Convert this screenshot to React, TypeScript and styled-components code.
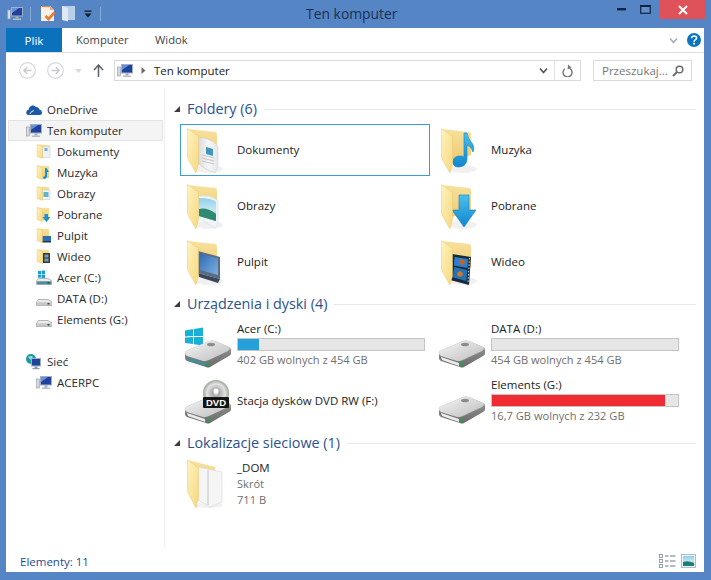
import React from "react";
import styled, { createGlobalStyle } from "styled-components";

const GlobalStyle = createGlobalStyle`
  html, body {
    margin: 0;
    padding: 0;
  }
  body {
    width: 711px;
    height: 580px;
    overflow: hidden;
    font-family: "Open Sans", "Noto Sans", sans-serif;
    font-size: 11.5px;
    color: #222;
  }
  svg {
    display: block;
    flex-shrink: 0;
  }
`;

const Frame = styled.div`
  display: flex;
  flex-direction: column;
  height: 580px;
  box-sizing: border-box;
  padding: 0 7px 8px 6px;
  background: #5585c5;
`;

const TitleBar = styled.div`
  display: grid;
  grid-template-columns: 300px auto 1fr;
  height: 28px;
`;

const QuickAccess = styled.div`
  display: flex;
  align-items: center;
  height: 27px;
  margin-left: 1px;
`;

const QatSeparator = styled.div<{ $right: number; $left: number }>`
  width: 1px;
  height: 14px;
  background: #86a9d8;
  margin: 0 ${(p) => p.$right}px 0 ${(p) => p.$left}px;
`;

const QatGap = styled.div<{ $width: number }>`
  width: ${(p) => p.$width}px;
`;

const WindowTitle = styled.div`
  font-size: 13.9px;
  line-height: 28px;
  color: #1c2f4f;
`;

const WindowControls = styled.div`
  display: flex;
  justify-content: flex-end;
  align-items: flex-start;
  margin-right: -1px;
`;

const ControlButton = styled.div<{ $close?: boolean }>`
  display: flex;
  align-items: center;
  justify-content: center;
  height: 19px;
  width: ${(p) => (p.$close ? 45 : 24)}px;
  margin-left: ${(p) => (p.$close ? 3 : 0)}px;
  background: ${(p) => (p.$close ? "#e0525a" : "transparent")};
`;

const Main = styled.div`
  flex: 1;
  display: flex;
  flex-direction: column;
  background: #fff;
  min-height: 0;
`;

const Ribbon = styled.div`
  display: flex;
  align-items: stretch;
  height: 24px;
  border-bottom: 1px solid #dcdddf;
`;

const FileTab = styled.div`
  width: 56px;
  display: flex;
  align-items: center;
  justify-content: center;
  color: #fff;
  background: #0a72bd;
`;

const RibbonTab = styled.div<{ $width: number }>`
  width: ${(p) => p.$width}px;
  line-height: 24px;
  font-size: 11.2px;
  color: #444;
  padding-left: 14px;
  box-sizing: border-box;
`;

const RibbonRight = styled.div`
  margin-left: auto;
  display: flex;
  align-items: center;
  gap: 9px;
  padding-right: 3px;
`;

const Toolbar = styled.div`
  display: flex;
  align-items: flex-start;
  height: 35px;
  box-sizing: border-box;
  padding-top: 7px;
`;

const NavButtons = styled.div`
  display: flex;
  align-items: center;
  height: 21px;
  width: 108px;
  padding-left: 13px;
  box-sizing: border-box;
  gap: 11px;
`;

const AddressBox = styled.div`
  width: 467px;
  height: 21px;
  box-sizing: border-box;
  border: 1px solid #dadada;
  display: flex;
  align-items: center;
  padding-left: 2px;
`;

const Crumb = styled.span`
  color: #222;
  margin-left: 8px;
  flex: 1;
`;

const AddressEnd = styled.div`
  width: 25px;
  align-self: stretch;
  border-left: 1px solid #e3e3e3;
  display: flex;
  align-items: center;
  justify-content: center;
  margin-left: 6px;
`;

const SearchBox = styled.div`
  width: 99px;
  height: 21px;
  margin-left: 12px;
  box-sizing: border-box;
  border: 1px solid #dadada;
  display: flex;
  align-items: center;
  justify-content: space-between;
  padding: 0 7px 0 8px;
  color: #777;
`;

const Body = styled.div`
  flex: 1;
  display: flex;
  min-height: 0;
`;

const NavPane = styled.div`
  width: 159px;
  box-sizing: border-box;
  border-right: 1px solid #f0f0f0;
  padding: 11px 0 0 2px;
`;

const NavRow = styled.div<{ $level?: number; $selected?: boolean; $spaced?: boolean }>`
  display: flex;
  align-items: center;
  gap: 5px;
  height: 21px;
  width: 155px;
  box-sizing: border-box;
  padding-left: ${(p) => (p.$level ? 28 : 18)}px;
  margin-top: ${(p) => (p.$spaced ? 21 : 0)}px;
  background: ${(p) => (p.$selected ? "#f4f4f4" : "transparent")};
  box-shadow: ${(p) => (p.$selected ? "inset 0 0 0 1px #e4e4e4" : "none")};
  color: #2a2a2a;
`;

const Content = styled.div`
  flex: 1;
  padding: 11px 8px 0 9px;
`;

const Section = styled.section`
  margin-bottom: 6px;
`;

const GroupHeader = styled.div`
  display: flex;
  align-items: center;
  height: 20px;
  margin-bottom: 5px;
  font-size: 14.35px;
  color: #2a5290;
`;

const GroupTitle = styled.span`
  margin: -2px 7px 0;
`;

const GroupRule = styled.div`
  flex: 1;
  height: 1px;
  background: #e6e9ee;
`;

const TileGrid = styled.div`
  display: grid;
  grid-template-columns: 250px 250px;
  grid-auto-rows: 52px;
  gap: 4px;
  margin-left: 6px;
`;

const Tile = styled.div<{ $selected?: boolean }>`
  display: flex;
  align-items: center;
  gap: 6px;
  box-sizing: border-box;
  padding-left: 4px;
  border: 1px solid ${(p) => (p.$selected ? "#3d9bd6" : "transparent")};
`;

const TileText = styled.div`
  display: flex;
  flex-direction: column;
  flex: 1;
  margin-right: 4px;
`;

const DriveText = styled(TileText)`
  margin-top: -2px;
`;

const TileName = styled.div`
  color: #222;
  line-height: 16px;
`;

const TileSub = styled.div`
  color: #6f6f6f;
  font-size: 11.1px;
  line-height: 16px;
`;

const UsageBar = styled.div`
  height: 13px;
  box-sizing: border-box;
  margin: 1px 0 1px;
  border: 1px solid #c4c4c4;
  background: #e6e6e6;
`;

const UsageFill = styled.div<{ $tone: string }>`
  height: 100%;
  background: ${(p) => p.$tone};
`;

const StatusBar = styled.div`
  height: 24px;
  display: flex;
  align-items: center;
  justify-content: space-between;
  padding: 2px 8px 0 14px;
  box-sizing: border-box;
  color: #1f4c8f;
`;

const ViewIcons = styled.div`
  display: flex;
  align-items: center;
  gap: 5px;
`;

const Gradients = styled.svg`
  position: absolute;
  width: 0;
  height: 0;
`;

const SharedDefs = () => (
  <Gradients>
    <defs>
      <linearGradient id="leaf" x1="0" y1="0" x2="1" y2="1">
        <stop offset="0" stopColor="#fff3c0" />
        <stop offset="1" stopColor="#f6d87f" />
      </linearGradient>
      <linearGradient id="back" x1="0" y1="0" x2="0" y2="1">
        <stop offset="0" stopColor="#f8e19c" />
        <stop offset="1" stopColor="#edcb74" />
      </linearGradient>
      <linearGradient id="paper" x1="0" y1="0" x2="1" y2="0">
        <stop offset="0" stopColor="#d8d8dc" />
        <stop offset="0.5" stopColor="#f7f7f7" />
        <stop offset="1" stopColor="#e4e6ea" />
      </linearGradient>
      <linearGradient id="sky" x1="0" y1="0" x2="0" y2="1">
        <stop offset="0" stopColor="#8fd0ec" />
        <stop offset="0.55" stopColor="#c8e8ee" />
        <stop offset="1" stopColor="#4e9a8c" />
      </linearGradient>
      <linearGradient id="screen" x1="0" y1="0" x2="1" y2="1">
        <stop offset="0" stopColor="#2e6ab4" />
        <stop offset="1" stopColor="#7fb0e0" />
      </linearGradient>
      <linearGradient id="note" x1="0" y1="0" x2="0" y2="1">
        <stop offset="0" stopColor="#4cc0ec" />
        <stop offset="1" stopColor="#0f86cf" />
      </linearGradient>
      <linearGradient id="driveTop" x1="0" y1="0" x2="1" y2="1">
        <stop offset="0" stopColor="#f6f6f6" />
        <stop offset="1" stopColor="#bdbdbd" />
      </linearGradient>
      <linearGradient id="driveSide" x1="0" y1="0" x2="0" y2="1">
        <stop offset="0" stopColor="#9c9c9c" />
        <stop offset="1" stopColor="#6a6a6a" />
      </linearGradient>
      <radialGradient id="disc">
        <stop offset="0" stopColor="#f4f4f4" />
        <stop offset="0.25" stopColor="#a8a8a8" />
        <stop offset="0.7" stopColor="#e2e2e2" />
        <stop offset="1" stopColor="#9aa69b" />
      </radialGradient>
    </defs>
  </Gradients>
);

type Overlay = "doc" | "music" | "photo" | "download" | "desktop" | "video";

const FolderBase: React.FC<{ children?: React.ReactNode }> = ({ children }) => (
  <svg width="46" height="50" viewBox="0 0 46 50">
    <ellipse cx="24" cy="44" rx="14" ry="4" fill="#000" opacity="0.06" />
    <path d="M3 4 L30 7 Q32 7 32 10 L32 30 L13 36 Z" fill="url(#back)" />
    {children}
    <path d="M2.5 3.5 L13.5 11 L13.5 39 L11 48 L3.5 35 Q2.5 34 2.5 32 Z" fill="url(#leaf)" stroke="#e8c873" strokeWidth="0.5" />
  </svg>
);

const BigFolder: React.FC<{ kind: Overlay }> = ({ kind }) => (
  <FolderBase>
    {kind === "doc" && (
      <g>
        <path d="M13 12 Q29 14 33 22 L33 41 L30 48 Q20 44 13 39 Z" fill="url(#paper)" stroke="#c9c9cf" strokeWidth="0.5" />
        <path d="M21 22 L28 24 L28 31 L21 29 Z" fill="#3f96b8" />
        <path d="M17 30 L29 33 M17 33 L29 36 M17 36 L29 39" stroke="#c1c4ca" strokeWidth="1" />
      </g>
    )}
    {kind === "photo" && (
      <g>
        <path d="M13 15 Q28 14 33 20 L33 42 L30 47 L13 37 Z" fill="#eef4f8" stroke="#cdd6dc" strokeWidth="0.5" />
        <path d="M14 17 Q27 17 31 21 L31 40 L14 35 Z" fill="url(#sky)" />
        <path d="M14 28 Q22 26 31 33 L31 40 L14 35 Z" fill="#2e8a70" />
      </g>
    )}
    {kind === "desktop" && (
      <g>
        <path d="M13 14 L35 20 L35 42 L13 36 Z" fill="#5b6c80" />
        <path d="M15 16.5 L33 21.5 L33 38 L15 33 Z" fill="url(#screen)" />
        <path d="M13 36 L35 42 L33 46 L14 40 Z" fill="#39485a" />
      </g>
    )}
    {kind === "music" && (
      <path
        d="M25 8 L28 8 Q29 14 33 18 Q36 22 34 27 Q32 21 28 20 L28 34 Q28 41 20 42 Q13 42 14 36 Q15 31 21 31 Q24 31 25 32 Z"
        fill="url(#note)"
        stroke="#0e7dc4"
        strokeWidth="0.6"
      />
    )}
    {kind === "download" && (
      <path d="M20 14 L30 14 L30 29 L37 29 L25 46 L13 29 L20 29 Z" fill="url(#note)" stroke="#0e7dc4" strokeWidth="0.6" />
    )}
    {kind === "video" && (
      <g>
        <path d="M13 17 L32 20 L30 48 L11 43 Z" fill="#1b2a38" />
        <path d="M15.5 20 L29 22 L28.4 31 L15 28.5 Z" fill="#2f7fd0" />
        <path d="M15 30 L28.3 33 L27.4 44 L14 40.5 Z" fill="#2272b8" />
        <circle cx="23" cy="25" r="2.8" fill="#b9672e" />
        <circle cx="21" cy="37" r="2.8" fill="#c9782a" />
        <path d="M30.5 21 L29 46" stroke="#d8dde0" strokeWidth="1" strokeDasharray="1.6 1.6" />
      </g>
    )}
  </FolderBase>
);

const ShortcutFolder = () => (
  <svg width="46" height="52" viewBox="0 0 46 52">
    <ellipse cx="24" cy="47" rx="14" ry="3" fill="#000" opacity="0.05" />
    <path d="M3 2 L30 9 L30 30 L13 36 Z" fill="url(#back)" />
    <path d="M13 9 L37 14 L37 44 L25 49 L13 42 Z" fill="#f5f5f6" stroke="#d6d6da" strokeWidth="0.6" />
    <path d="M23 12 L23 47" stroke="#c4c4c8" strokeWidth="1" />
    <path d="M2.5 2 L13.5 10 L13.5 40 L11 50 L3.5 36 Q2.5 34 2.5 32 Z" fill="url(#leaf)" stroke="#e8c873" strokeWidth="0.5" />
  </svg>
);

const DriveShape: React.FC<{ tint?: string }> = ({ tint }) => (
  <g>
    <path d="M0 33 Q0 31 3 30 L24 21 Q27 20 30 21 L44 27 Q46 28 46 30 L46 34 Q46 35 44 36 L25 47 Q23 48 21 47 L2 41 Q0 40 0 38 Z" fill="url(#driveSide)" />
    <path d="M0 33 Q0 31 3 30 L24 21 Q27 20 30 21 L44 27 Q46 29 43 31 L24 40 Q21 41.5 18 41 L2 36 Q0 35 0 33 Z" fill="url(#driveTop)" />
    <ellipse cx="26" cy="24.5" rx="4" ry="1.8" fill="#8c8c8c" />
    <path d="M2 37 L20 43 L20 46 L3 40 Z" fill={tint ?? "#ececec"} />
    <path d="M21.5 43 L25 41.5 L25 45 L21.5 46.5 Z" fill="#2f9a55" />
  </g>
);

const BigDrive: React.FC<{ kind?: "plain" | "windows" | "dvd" }> = ({ kind = "plain" }) => (
  <svg width="46" height="50" viewBox="0 0 46 50">
    {kind === "windows" && (
      <g fill="#19b0d8">
        <path d="M0 10.5 L8 9 L8 16 L0 16.5 Z" />
        <path d="M9 9 L18 7.5 L18 16 L9 16 Z" />
        <path d="M0 17.5 L8 17 L8 24 L0 23 Z" />
        <path d="M9 17 L18 17 L18 25.5 L9 24.2 Z" />
      </g>
    )}
    <DriveShape tint={kind === "windows" ? "#3f8f9c" : undefined} />
    {kind === "dvd" && (
      <g>
        <circle cx="31" cy="17" r="13" fill="url(#disc)" />
        <circle cx="31" cy="15" r="2.5" fill="#fff" />
        <rect x="18" y="21" width="26" height="11" rx="1" fill="#141414" />
        <text x="31" y="30" textAnchor="middle" fontSize="9.5" fontWeight="700" fontFamily="Liberation Sans, sans-serif" fill="#fff">
          DVD
        </text>
      </g>
    )}
  </svg>
);

const PcIcon = () => (
  <svg width="16" height="16" viewBox="0 0 16 16">
    <rect x="0.5" y="4" width="3" height="9" fill="#d6dade" stroke="#8f98a2" strokeWidth="0.6" />
    <rect x="4" y="1" width="12" height="9.5" fill="#9fb0c6" />
    <rect x="5" y="2" width="10" height="7.5" fill="#21429c" />
    <path d="M5 2 L12 2 L5 7 Z" fill="#6a8fd6" />
    <rect x="8.5" y="10.5" width="3" height="2" fill="#a0a8b0" />
    <rect x="6" y="12.5" width="8" height="1.5" fill="#b6bcc2" />
  </svg>
);

const SmallFolder: React.FC<{ tone: string; kind: "doc" | "arrow" | "note" | "screen" | "film" | "photo" }> = ({ tone, kind }) => (
  <svg width="16" height="16" viewBox="0 0 16 16">
    <path d="M1 0.5 L13 1 L13 13 L7 13 Z" fill="url(#back)" />
    {kind === "note" && <path d="M9 3 L10.5 3 L13 7 L11 7 L11 12 Q10 14.5 7.5 14 L7 12 L9 11 Z" fill={tone} />}
    {kind === "arrow" && <path d="M8.5 7 L12 7 L12 10 L14.5 10 L10.5 15 L6.5 10 L8.5 10 Z" fill={tone} />}
    {kind === "doc" && (
      <g>
        <rect x="6" y="2.5" width="8" height="11" fill="#eef0f2" stroke="#c4c8cc" strokeWidth="0.5" />
        <rect x="8.5" y="4" width="3" height="3" fill={tone} />
      </g>
    )}
    {kind === "photo" && (
      <g>
        <rect x="6" y="4" width="8" height="9.5" fill="#f0f3f5" stroke="#c4c8cc" strokeWidth="0.5" />
        <rect x="7.5" y="6" width="5" height="5" fill={tone} />
      </g>
    )}
    {kind === "screen" && (
      <g>
        <rect x="6" y="8" width="9" height="6" fill={tone} />
        <rect x="6" y="13" width="9" height="1.5" fill="#2a3644" />
      </g>
    )}
    {kind === "film" && (
      <g>
        <rect x="7" y="4" width="7" height="10" fill="#2d3a44" />
        <rect x="8.5" y="5.5" width="4" height="3" fill={tone} />
        <rect x="8.5" y="9.5" width="4" height="3" fill={tone} />
      </g>
    )}
    <path d="M1 0.5 L6.5 2.5 L6.5 14.5 L1 12.5 Z" fill="url(#leaf)" stroke="#e3bf64" strokeWidth="0.4" />
  </svg>
);

const SmallDrive: React.FC<{ windows?: boolean }> = ({ windows }) => (
  <svg width="16" height="16" viewBox="0 0 16 16">
    {windows && (
      <g fill="#1a9fd0">
        <rect x="2" y="1" width="3" height="3" />
        <rect x="5.6" y="0.5" width="3.4" height="3.5" />
        <rect x="2" y="4.6" width="3" height="3" />
        <rect x="5.6" y="4.6" width="3.4" height="3.4" />
      </g>
    )}
    <path d="M2.5 8.5 L12 8.5 L16 11 L16 14.5 L0.5 14.5 L0.5 11 Z" fill="#ececec" stroke="#8a8a8a" strokeWidth="0.6" />
    <rect x="1" y="11.3" width="14.5" height="3" rx="1" fill={windows ? "#4d8e9a" : "#c8c8c8"} />
    <rect x="11.5" y="12" width="2" height="1.5" fill="#39424a" />
  </svg>
);

const CloudIcon = () => (
  <svg width="16" height="16" viewBox="0 0 16 16">
    <path
      d="M3.2 13 Q0 13 0.2 10.2 Q0.4 8 2.5 7.8 Q3 4.6 6 3.6 Q8.6 3 10 5 Q13 5 13.4 7.6 Q16 8 16 10.5 Q16 13 13.5 13 Z"
      fill="#1a5aa6"
    />
    <path d="M4 12 Q5 9 7.8 8.6" stroke="#fff" strokeWidth="0.9" fill="none" />
  </svg>
);

const NetworkIcon = () => (
  <svg width="16" height="16" viewBox="0 0 16 16">
    <circle cx="5" cy="5" r="5" fill="#1b9a9c" />
    <path d="M2 3 Q5 1 7 3 L5 6 Z" fill="#9de0d6" />
    <rect x="5" y="4" width="10" height="8.5" fill="#9fb0c6" />
    <rect x="6" y="5" width="8" height="6.5" fill="#21429c" />
    <rect x="8.5" y="12.5" width="3" height="1.5" fill="#8f98a2" />
    <rect x="6.5" y="14" width="7" height="1.2" fill="#8f98a2" />
  </svg>
);

const DocCheckIcon = () => (
  <svg width="16" height="17" viewBox="0 0 16 17">
    <path d="M1 1 L10 1 L14 5 L14 16 L1 16 Z" fill="#fbf1e8" />
    <path d="M10 1 L14 5 L10 5 Z" fill="#f0a878" />
    <path d="M2 1 L10 1 L10 2.2 L2 2.2 Z" fill="#e8865a" />
    <path d="M5.5 11 L8.5 14 L14.5 7.5" fill="none" stroke="#ee7a2c" strokeWidth="2.6" />
  </svg>
);

const PaleFolderIcon = () => (
  <svg width="14" height="17" viewBox="0 0 14 17">
    <path d="M0 1 L13 1 L13 15 L0 15 Z" fill="#b9cfe8" />
    <path d="M0 1 L6 3 L6 16.5 L0 15 Z" fill="#dfe9f4" />
  </svg>
);

const QatDropdown = () => (
  <svg width="8" height="8" viewBox="0 0 8 8">
    <rect x="0.5" y="0.5" width="7" height="1.3" fill="#141d2b" />
    <path d="M0.5 3.5 L7.5 3.5 L4 7.5 Z" fill="#141d2b" />
  </svg>
);

const MinimizeIcon = () => (
  <svg width="9" height="3" viewBox="0 0 9 3">
    <rect width="9" height="2.4" fill="#10233f" />
  </svg>
);

const MaximizeIcon = () => (
  <svg width="11" height="9" viewBox="0 0 11 9">
    <rect x="0.75" y="0.75" width="9.5" height="7.5" fill="#5f8fcc" stroke="#10233f" strokeWidth="1.2" />
    <rect x="0" y="0" width="11" height="2" fill="#10233f" />
  </svg>
);

const CloseIcon = () => (
  <svg width="10" height="10" viewBox="0 0 10 10">
    <path d="M1 1 L9 9 M9 1 L1 9" stroke="#fff" strokeWidth="2" />
  </svg>
);

const ChevronDown: React.FC<{ color: string; size?: number }> = ({ color, size = 9 }) => (
  <svg width={size} height={size} viewBox="0 0 9 9">
    <path d="M1 2.5 L4.5 6.5 L8 2.5" fill="none" stroke={color} strokeWidth="1.6" />
  </svg>
);

const HelpIcon = () => (
  <svg width="14" height="14" viewBox="0 0 14 14">
    <circle cx="7" cy="7" r="7" fill="#0b74c2" />
    <path d="M4.6 5.2 Q4.8 3 7.1 3 Q9.5 3 9.5 5 Q9.5 6.2 8.2 6.9 Q7.1 7.5 7.1 8.8" fill="none" stroke="#fff" strokeWidth="1.6" />
    <rect x="6.2" y="9.7" width="1.8" height="1.8" fill="#fff" />
  </svg>
);

const CircleArrow: React.FC<{ forward?: boolean }> = ({ forward }) => (
  <svg width="17" height="17" viewBox="0 0 17 17">
    <circle cx="8.5" cy="8.5" r="7.8" fill="none" stroke="#d0d3d7" strokeWidth="1.1" />
    <path
      d={forward ? "M4.5 8.5 L12 8.5 M8.8 5.2 L12.2 8.5 L8.8 11.8" : "M12.5 8.5 L5 8.5 M8.2 5.2 L4.8 8.5 L8.2 11.8"}
      fill="none"
      stroke="#c6c9cd"
      strokeWidth="1.3"
    />
  </svg>
);

const SmallDropdown = () => (
  <svg width="7" height="4" viewBox="0 0 7 4">
    <path d="M0 0 L7 0 L3.5 4 Z" fill="#d8dadd" />
  </svg>
);

const UpArrow = () => (
  <svg width="11" height="13" viewBox="0 0 11 13">
    <path d="M5.5 13 L5.5 1.5 M1 6 L5.5 1 L10 6" fill="none" stroke="#5a6068" strokeWidth="1.5" />
  </svg>
);

const CrumbMark = styled.svg`
  margin-left: 8px;
`;

const CrumbArrow = () => (
  <CrumbMark width="5" height="7" viewBox="0 0 5 7">
    <path d="M0.5 0 L4.5 3.5 L0.5 7 Z" fill="#6d6d6d" />
  </CrumbMark>
);

const RefreshIcon = () => (
  <svg width="11" height="13" viewBox="0 0 11 13">
    <path d="M7.8 3.6 A4.5 4.5 0 1 1 2.6 3.8" fill="none" stroke="#70757a" strokeWidth="1.4" transform="translate(0.2 1)" />
    <path d="M6 0.5 L9.5 3.8 L5.6 5.6 Z" fill="#70757a" />
  </svg>
);

const SearchIcon = () => (
  <svg width="12" height="12" viewBox="0 0 12 12">
    <circle cx="7.5" cy="4.5" r="3.3" fill="none" stroke="#6b6b6b" strokeWidth="1.5" />
    <path d="M5 7 L1 11" stroke="#6b6b6b" strokeWidth="2" />
  </svg>
);

const CollapseMark = () => (
  <svg width="6" height="6" viewBox="0 0 6 6">
    <path d="M0 6 L6 6 L6 0 Z" fill="#3c3c3c" />
  </svg>
);

const DetailsViewIcon = () => (
  <svg width="17" height="14" viewBox="0 0 17 14">
    <g fill="none" stroke="#8c97a6" strokeWidth="0.9">
      <rect x="0.5" y="0.5" width="3" height="3" />
      <rect x="0.5" y="5.5" width="3" height="3" />
      <rect x="0.5" y="10.5" width="3" height="3" />
    </g>
    <path d="M6 2 L9.5 2 M11 2 L16.5 2 M6 7 L9.5 7 M11 7 L16.5 7 M6 12 L9.5 12 M11 12 L16.5 12" stroke="#6d7885" strokeWidth="1.2" />
  </svg>
);

const TilesViewIcon = () => (
  <svg width="15" height="14" viewBox="0 0 15 14">
    <rect x="0.5" y="0.5" width="14" height="13" fill="#eef3f7" stroke="#a9c0d4" />
    <rect x="2" y="2" width="11" height="10" fill="url(#sky)" />
    <path d="M2 8 Q7 6 13 9 L13 12 L2 12 Z" fill="#1f7d78" />
  </svg>
);

interface DriveInfo {
  name: string;
  free: number;
  total: number;
  freeLabel: string;
  icon: "plain" | "windows";
}

const acer: DriveInfo = { name: "Acer (C:)", free: 402, total: 454, freeLabel: "402 GB wolnych z 454 GB", icon: "windows" };
const data: DriveInfo = { name: "DATA (D:)", free: 454, total: 454, freeLabel: "454 GB wolnych z 454 GB", icon: "plain" };
const elements: DriveInfo = { name: "Elements (G:)", free: 16.7, total: 232, freeLabel: "16,7 GB wolnych z 232 GB", icon: "plain" };

const DriveTile: React.FC<{ drive: DriveInfo }> = ({ drive }) => {
  const used = (drive.total - drive.free) / drive.total;
  return (
    <Tile>
      <BigDrive kind={drive.icon} />
      <DriveText>
        <TileName>{drive.name}</TileName>
        <UsageBar>
          <UsageFill $tone={used > 0.9 ? "#f02c32" : "#26a0da"} style={{ width: `${used * 100}%` }} />
        </UsageBar>
        <TileSub>{drive.freeLabel}</TileSub>
      </DriveText>
    </Tile>
  );
};

const Group: React.FC<{ title: string; children: React.ReactNode }> = ({ title, children }) => (
  <Section>
    <GroupHeader>
      <CollapseMark />
      <GroupTitle>{title}</GroupTitle>
      <GroupRule />
    </GroupHeader>
    <TileGrid>{children}</TileGrid>
  </Section>
);

const folders: { name: string; kind: Overlay }[] = [
  { name: "Dokumenty", kind: "doc" },
  { name: "Muzyka", kind: "music" },
  { name: "Obrazy", kind: "photo" },
  { name: "Pobrane", kind: "download" },
  { name: "Pulpit", kind: "desktop" },
  { name: "Wideo", kind: "video" },
];

export default function App() {
  return (
    <Frame>
      <GlobalStyle />
      <SharedDefs />
      <TitleBar>
        <QuickAccess>
          <PcIcon />
          <QatSeparator $left={7} $right={9} />
          <DocCheckIcon />
          <QatGap $width={6} />
          <PaleFolderIcon />
          <QatGap $width={8} />
          <QatDropdown />
          <QatSeparator $left={8} $right={0} />
        </QuickAccess>
        <WindowTitle>Ten komputer</WindowTitle>
        <WindowControls>
          <ControlButton>
            <MinimizeIcon />
          </ControlButton>
          <ControlButton>
            <MaximizeIcon />
          </ControlButton>
          <ControlButton $close>
            <CloseIcon />
          </ControlButton>
        </WindowControls>
      </TitleBar>
      <Main>
        <Ribbon>
          <FileTab>Plik</FileTab>
          <RibbonTab $width={79}>Komputer</RibbonTab>
          <RibbonTab $width={70}>Widok</RibbonTab>
          <RibbonRight>
            <ChevronDown color="#a9afb6" />
            <HelpIcon />
          </RibbonRight>
        </Ribbon>
        <Toolbar>
          <NavButtons>
            <CircleArrow />
            <CircleArrow forward />
            <SmallDropdown />
            <UpArrow />
          </NavButtons>
          <AddressBox>
            <PcIcon />
            <CrumbArrow />
            <Crumb>Ten komputer</Crumb>
            <ChevronDown color="#4e5660" />
            <AddressEnd>
              <RefreshIcon />
            </AddressEnd>
          </AddressBox>
          <SearchBox>
            Przeszukaj...
            <SearchIcon />
          </SearchBox>
        </Toolbar>
        <Body>
          <NavPane>
            <NavRow><CloudIcon />OneDrive</NavRow>
            <NavRow $selected><PcIcon />Ten komputer</NavRow>
            <NavRow $level={1}><SmallFolder kind="doc" tone="#6fb4d8" />Dokumenty</NavRow>
            <NavRow $level={1}><SmallFolder kind="note" tone="#1c8fd6" />Muzyka</NavRow>
            <NavRow $level={1}><SmallFolder kind="photo" tone="#63b4c8" />Obrazy</NavRow>
            <NavRow $level={1}><SmallFolder kind="arrow" tone="#1c8fd6" />Pobrane</NavRow>
            <NavRow $level={1}><SmallFolder kind="screen" tone="#2a6fb6" />Pulpit</NavRow>
            <NavRow $level={1}><SmallFolder kind="film" tone="#7f9aa8" />Wideo</NavRow>
            <NavRow $level={1}><SmallDrive windows />Acer (C:)</NavRow>
            <NavRow $level={1}><SmallDrive />DATA (D:)</NavRow>
            <NavRow $level={1}><SmallDrive />Elements (G:)</NavRow>
            <NavRow $spaced><NetworkIcon />Sieć</NavRow>
            <NavRow $level={1}><PcIcon />ACERPC</NavRow>
          </NavPane>
          <Content>
            <Group title="Foldery (6)">
              {folders.map((folder, index) => (
                <Tile key={folder.name} $selected={index === 0}>
                  <BigFolder kind={folder.kind} />
                  <TileName>{folder.name}</TileName>
                </Tile>
              ))}
            </Group>
            <Group title="Urządzenia i dyski (4)">
              <DriveTile drive={acer} />
              <DriveTile drive={data} />
              <Tile>
                <BigDrive kind="dvd" />
                <TileName>Stacja dysków DVD RW (F:)</TileName>
              </Tile>
              <DriveTile drive={elements} />
            </Group>
            <Group title="Lokalizacje sieciowe (1)">
              <Tile>
                <ShortcutFolder />
                <TileText>
                  <TileName>_DOM</TileName>
                  <TileSub>Skrót</TileSub>
                  <TileSub>711 B</TileSub>
                </TileText>
              </Tile>
            </Group>
          </Content>
        </Body>
        <StatusBar>
          Elementy: 11
          <ViewIcons>
            <DetailsViewIcon />
            <TilesViewIcon />
          </ViewIcons>
        </StatusBar>
      </Main>
    </Frame>
  );
}
